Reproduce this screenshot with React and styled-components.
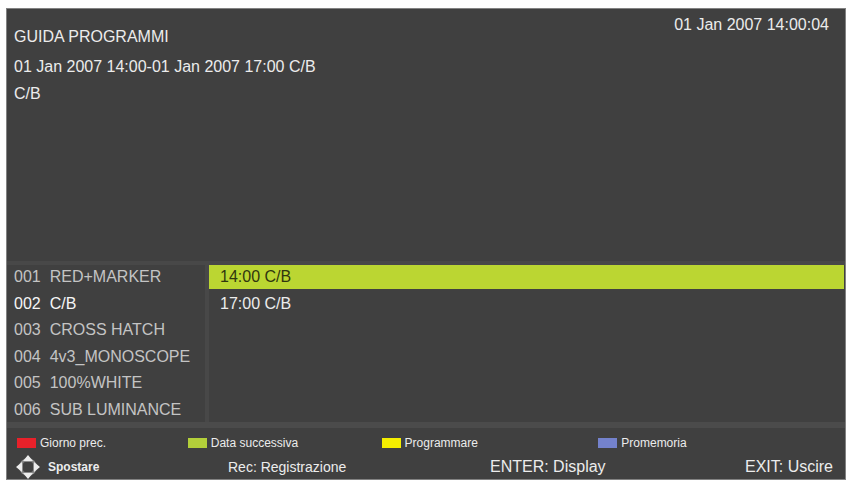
import React, { useState } from "react";
import styled, { createGlobalStyle } from "styled-components";

const GlobalStyle = createGlobalStyle`
  * {
    box-sizing: border-box;
  }
  body {
    margin: 0;
    background: #fff;
    font-family: "Liberation Sans", Arial, sans-serif;
    font-size: 16px;
  }
  button {
    margin: 0;
    padding: 0;
    border: 0;
    background: none;
    font: inherit;
    color: inherit;
    text-align: left;
    cursor: pointer;
  }
`;

const Screen = styled.main`
  margin: 8px 2px 0 6px;
  border: 1px solid #828282;
  background: #404040;
  color: #ececec;
`;

const Header = styled.header`
  display: flex;
  justify-content: space-between;
  min-height: 252px;
  padding: 4px 16px 0 7px;
`;

const Info = styled.div`
  padding-top: 8px;
`;

const Title = styled.h1`
  margin: 0;
  font-size: 16px;
  font-weight: normal;
  line-height: 32px;
`;

const InfoLine = styled.p`
  margin: 0;
  line-height: 27px;
`;

const Clock = styled.time`
  line-height: 24px;
`;

const Guide = styled.section`
  display: grid;
  grid-template-columns: 202px 1fr;
  border-top: 4px solid #484848;
  border-bottom: 6px solid #4b4b4b;
`;

const List = styled.ul`
  display: grid;
  grid-template-rows: repeat(5, 1fr) 24px;
  height: 157px;
  margin: 0;
  padding: 0 1px 0 0;
  list-style: none;
`;

const Channels = styled(List)`
  border-right: 4px solid #484848;
`;

const Channel = styled.button`
  display: flex;
  align-items: center;
  gap: 9px;
  width: 100%;
  height: 24px;
  padding-left: 7px;
  color: ${(props) => (props.$active ? "#f6f6f6" : "#c4c4c4")};
  white-space: nowrap;
`;

const Programme = styled.button`
  width: 100%;
  height: 24px;
  padding-left: 11px;
  background: ${(props) => (props.$active ? "#bbd632" : "none")};
  color: ${(props) => (props.$active ? "#30360f" : "#ececec")};
`;

const Footer = styled.footer`
  padding: 3px 12px 0 9px;
`;

const Keys = styled.div`
  display: grid;
  grid-template-columns: 171fr 194fr 217fr 235fr;
  padding-left: 1px;
`;

const Key = styled.button`
  display: flex;
  align-items: center;
  gap: 4px;
  height: 24px;
  font-size: 12px;
`;

const Swatch = styled.span`
  width: 19px;
  height: 10px;
  background: ${(props) => props.$color};
`;

const Hints = styled.div`
  display: grid;
  grid-template-columns: 212fr 262fr 171fr 172fr;
  align-items: center;
  height: 24px;
`;

const Move = styled.span`
  display: flex;
  align-items: center;
  gap: 8px;
  font-size: 12px;
  font-weight: bold;
`;

const Hint = styled.span`
  font-size: ${(props) => (props.$small ? "14px" : "16px")};
  text-align: ${(props) => (props.$end ? "right" : "left")};
`;

const channels = [
  { no: "001", name: "RED+MARKER" },
  { no: "002", name: "C/B" },
  { no: "003", name: "CROSS HATCH" },
  { no: "004", name: "4v3_MONOSCOPE" },
  { no: "005", name: "100%WHITE" },
  { no: "006", name: "SUB LUMINANCE" },
];

const programmes = ["14:00 C/B", "17:00 C/B"];

const keys = [
  { color: "#e8212a", label: "Giorno prec." },
  { color: "#b3cf3a", label: "Data successiva" },
  { color: "#f4ee00", label: "Programmare" },
  { color: "#7482cc", label: "Promemoria" },
];

function MoveIcon() {
  return (
    <svg width="24" height="24" viewBox="0 0 24 24">
      <circle cx="12" cy="12" r="9" fill="#8a8a8a" />
      <path
        d="M12 0L17 6H7zM12 24L17 18H7zM0 12L6 7V17zM24 12L18 7V17z"
        fill="#ececec"
      />
      <rect x="7" y="7" width="10" height="10" rx="2" fill="#404040" />
    </svg>
  );
}

export default function App() {
  let [channel, setChannel] = useState(1);
  let [programme, setProgramme] = useState(0);

  return (
    <>
      <GlobalStyle />
      <Screen>
        <Header>
          <Info>
            <Title>GUIDA PROGRAMMI</Title>
            <InfoLine>01 Jan 2007 14:00-01 Jan 2007 17:00 C/B</InfoLine>
            <InfoLine>C/B</InfoLine>
          </Info>
          <Clock>01 Jan 2007 14:00:04</Clock>
        </Header>
        <Guide>
          <Channels>
            {channels.map((item, i) => (
              <li key={item.no}>
                <Channel $active={i === channel} onClick={() => setChannel(i)}>
                  <span>{item.no}</span>
                  <span>{item.name}</span>
                </Channel>
              </li>
            ))}
          </Channels>
          <List>
            {programmes.map((item, i) => (
              <li key={item}>
                <Programme
                  $active={i === programme}
                  onClick={() => setProgramme(i)}
                >
                  {item}
                </Programme>
              </li>
            ))}
          </List>
        </Guide>
        <Footer>
          <Keys>
            {keys.map((item) => (
              <Key key={item.label}>
                <Swatch $color={item.color} />
                {item.label}
              </Key>
            ))}
          </Keys>
          <Hints>
            <Move>
              <MoveIcon />
              Spostare
            </Move>
            <Hint $small>Rec: Registrazione</Hint>
            <Hint>ENTER: Display</Hint>
            <Hint $end>EXIT: Uscire</Hint>
          </Hints>
        </Footer>
      </Screen>
    </>
  );
}
